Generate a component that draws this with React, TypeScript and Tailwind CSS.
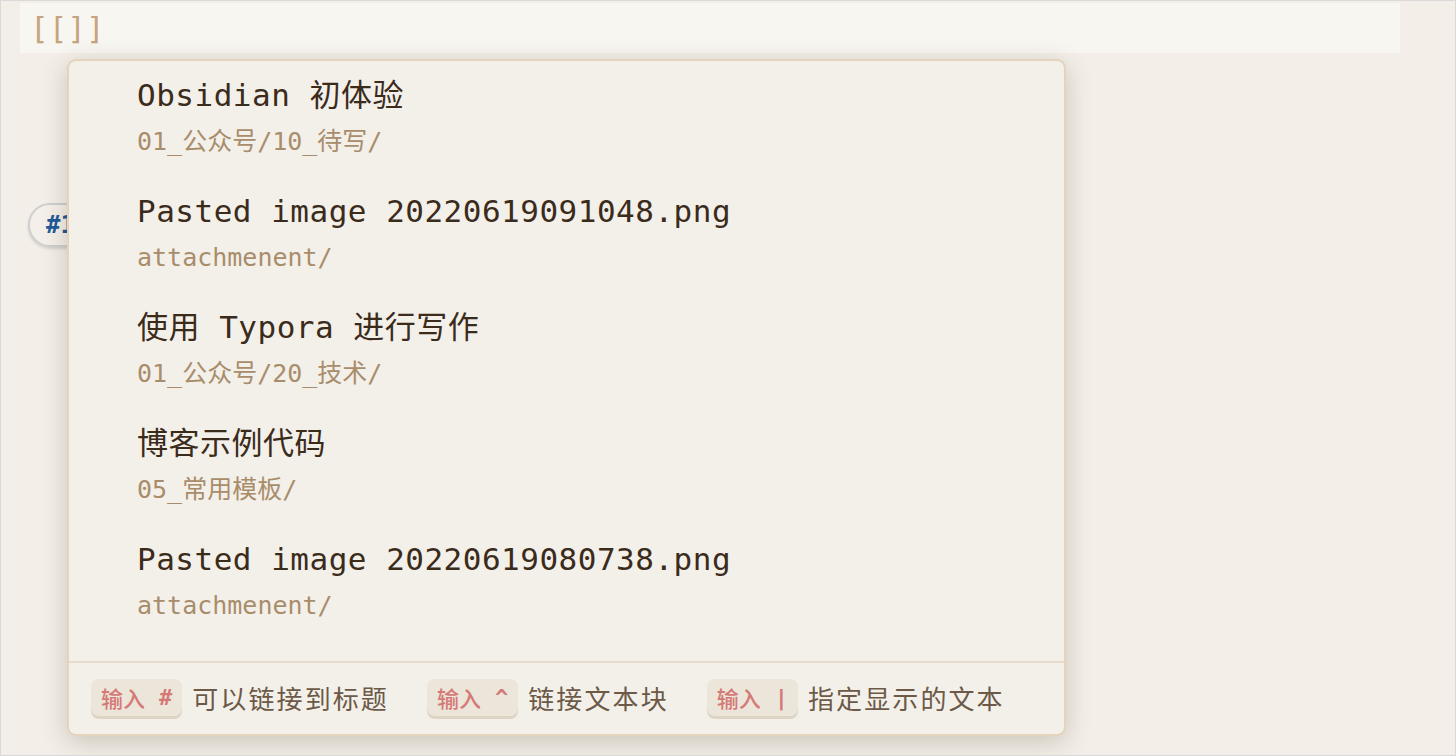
import React from "react";

const mono = "font-['DejaVu_Sans_Mono','Noto_Sans_CJK_SC',monospace]";
const sans = "font-['Noto_Sans_CJK_SC','Noto_Sans',sans-serif]";

const items = [
  { title: "Obsidian 初体验", path: "01_公众号/10_待写/" },
  { title: "Pasted image 20220619091048.png", path: "attachmenent/" },
  { title: "使用 Typora 进行写作", path: "01_公众号/20_技术/" },
  { title: "博客示例代码", path: "05_常用模板/" },
  { title: "Pasted image 20220619080738.png", path: "attachmenent/" },
];

const hints = [
  { key: "#", label: "可以链接到标题" },
  { key: "^", label: "链接文本块" },
  { key: "|", label: "指定显示的文本" },
];

function Kbd({ k }: { k: string }) {
  return (
    <span className="flex h-[37px] items-center gap-[14px] rounded-[8px] bg-[#ece5da] px-[10px] text-[22px] font-medium text-[#d47a76] shadow-[0_3px_0_#ddd4c6]">
      <span className={sans}>输入</span>
      <span className={`${mono} font-bold`}>{k}</span>
    </span>
  );
}

export default function App() {
  return (
    <div className="relative h-[756px] w-[1456px] overflow-hidden border border-[#d9d9d9] bg-[#f3efe8]">
      <div className="px-[19px] pt-[2px]">
        <div className={`flex h-[50px] w-[1380px] items-center bg-[#f8f6f1] pl-[10px] text-[31px] text-[#c5a57f] ${mono}`}>
          [[]]
        </div>
        <div className="mt-[150px] pl-[8px]">
          <span className="inline-flex h-[44px] items-center rounded-full border-2 border-[#cfcfcf] bg-[#f4f0e9] px-[16px] text-[24px] font-bold text-[#1f5a9a] shadow-[0_2px_3px_rgba(0,0,0,0.12)]">
            <span className={mono}>#1</span>
          </span>
        </div>
      </div>

      <div className="absolute left-[66px] top-[58px] w-[999px] rounded-[9px] border-2 border-[#e3d4bb] bg-[#f3f0ea] shadow-[0_6px_26px_rgba(60,40,20,0.22)]">
        <div className="pb-[20px]">
          {items.map((it) => (
            <div key={it.title} className="flex flex-col gap-[10px] pl-[68px] pt-[14px] pb-[18px]">
              <div className={`${mono} h-[40px] text-[31px] leading-[40px] tracking-[0.5px] text-[#3b2b1b]`}>
                {it.title}
              </div>
              <div className={`${mono} h-[34px] text-[25px] leading-[34px] text-[#a98d6b]`}>
                {it.path}
              </div>
            </div>
          ))}
        </div>
        <div className="flex h-[73px] items-center border-t-2 border-[#e7dccb] pb-[3px] pl-[22px]">
          {hints.map((h) => (
            <div key={h.key} className="mr-[38px] flex items-center gap-[10px]">
              <Kbd k={h.key} />
              <span className={`${sans} text-[26px] tracking-[2.1px] text-[#6c5947]`}>{h.label}</span>
            </div>
          ))}
        </div>
      </div>
    </div>
  );
}
